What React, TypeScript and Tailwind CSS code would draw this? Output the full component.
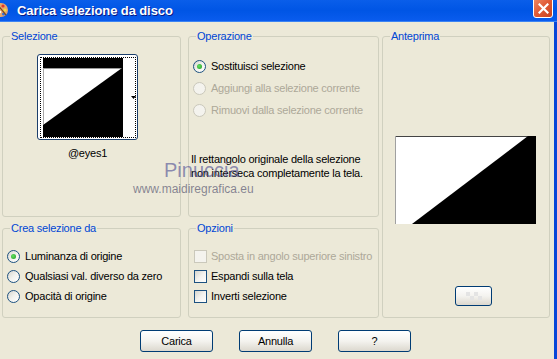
import React from "react";

function GroupBox({ label, className, children }: { label: string; className?: string; children?: React.ReactNode }) {
  return (
    <div className={`relative border border-[#D0D0BF] rounded-[3px] ${className ?? ""}`}>
      <span className="absolute left-[7px] top-[-7px] px-[1px] bg-[#ECE9D8] text-[#0046D5] leading-[13px] whitespace-nowrap">
        {label}
      </span>
      {children}
    </div>
  );
}

function Radio({ checked, disabled }: { checked?: boolean; disabled?: boolean }) {
  return (
    <span
      className={`shrink-0 w-[13px] h-[13px] rounded-full border flex items-center justify-center ${
        disabled
          ? "border-[#CAC8BB] bg-[#F4F3EE]"
          : "border-[#1C5180] bg-gradient-to-br from-[#D6D5CE] via-[#F2F2EE] to-white"
      }`}
    >
      {checked && <span className="w-[5px] h-[5px] rounded-full bg-[radial-gradient(circle_at_40%_40%,#63E063,#1F9A1F)]" />}
    </span>
  );
}

function Check({ disabled }: { disabled?: boolean }) {
  return (
    <span
      className={`shrink-0 w-[13px] h-[13px] border ${
        disabled
          ? "border-[#CAC8BB] bg-[#F4F3EE]"
          : "border-[#1C5180] bg-gradient-to-br from-[#D6D5CE] via-[#F2F2EE] to-white"
      }`}
    />
  );
}

function Row({ children, h = "h-[22px]" }: { children: React.ReactNode; h?: string }) {
  return <div className={`flex items-center ${h}`}>{children}</div>;
}

function XpButton({ children, className }: { children?: React.ReactNode; className?: string }) {
  return (
    <div
      className={`flex items-center justify-center rounded-[3px] border border-[#003C74] bg-gradient-to-b from-white via-[#F4F3EF] to-[#DCD8CE] text-black ${className ?? ""}`}
    >
      {children}
    </div>
  );
}

export default function App() {
  return (
    <div className="w-[557px] h-[359px] overflow-hidden bg-[#ECE9D8] flex flex-col relative font-['Liberation_Sans',Arial,sans-serif] text-[11px] tracking-[-0.22px] text-black">
      {/* Title bar */}
      <div className="h-[22px] shrink-0 flex items-start bg-gradient-to-b from-[#0A5EEA] via-[#0055E5] to-[#0A5CEE] border-b border-[#3B83F2]">
        <svg width="14" height="16" viewBox="0 0 14 16" className="ml-[-6px] mt-[2px]">
          <ellipse cx="7" cy="8" rx="7" ry="7" fill="#E9A66B" />
          <circle cx="9" cy="4" r="1.6" fill="#E23B2E" />
          <circle cx="11" cy="8" r="1.5" fill="#F3E23A" />
          <circle cx="9.5" cy="12" r="1.5" fill="#2F6FE0" />
          <circle cx="6" cy="10" r="1.3" fill="#FFFFFF" />
          <path d="M3 2 L12 13" stroke="#7A4A20" strokeWidth="1.2" />
        </svg>
        <span className="ml-[9px] mt-[3px] text-white font-bold text-[13px] tracking-[-0.1px] leading-[16px] [text-shadow:1px_1px_#0A1883] whitespace-nowrap">
          Carica selezione da disco
        </span>
        <div className="ml-auto mr-[4px] mt-[-3px] w-[20px] h-[21px] rounded-[3px] border border-white bg-gradient-to-br from-[#EF8A66] via-[#E05A36] to-[#C8431F] flex items-center justify-center">
          <svg width="11" height="11" viewBox="0 0 11 11" className="mt-[2px]">
            <path d="M1.5 1.5 L9.5 9.5 M9.5 1.5 L1.5 9.5" stroke="white" strokeWidth="2.2" strokeLinecap="square" />
          </svg>
        </div>
      </div>

      {/* Body */}
      <div className="flex flex-1">
        <div className="flex-1 flex flex-col pt-[14px]">
          <div className="flex">
            {/* Column 1 */}
            <div className="ml-[2px] w-[179px] flex flex-col">
              <GroupBox label="Selezione" className="h-[181px]">
                <div className="ml-[34px] mt-[17px] w-[101px] flex flex-col items-center">
                  <div className="w-[101px] h-[86px] rounded-[3px] border border-[#1B3E6B] bg-white pl-[2px] pt-[2px] pr-[1px] pb-[1px]">
                    <div className="w-full h-full border border-dotted border-black flex items-center pl-[2px]">
                      <svg width="80" height="79" viewBox="0 0 80 79" className="shrink-0 self-start">
                        <rect x="0" y="0" width="80" height="79" fill="#FFFFFF" />
                        <rect x="0" y="0" width="80" height="10" fill="#000000" />
                        <line x1="0" y1="10.5" x2="79" y2="10.5" stroke="#9A9A9A" strokeWidth="1" />
                        <line x1="0.5" y1="10" x2="0.5" y2="67" stroke="#A8A8A8" strokeWidth="1" />
                        <polygon points="79,10 80,10 80,79 0,79 0,67" fill="#000000" />
                      </svg>
                      <svg width="5" height="3" viewBox="0 0 5 3" className="ml-auto mr-[-1px]">
                        <polygon points="0,0 5,0 2.5,3" fill="#000" />
                      </svg>
                    </div>
                  </div>
                  <div className="mt-[7px] leading-[13px]">@eyes1</div>
                </div>
              </GroupBox>
              <GroupBox label="Crea selezione da" className="mt-[11px] h-[90px]">
                <div className="pl-[4px] pt-[17px] flex flex-col">
                  <Row h="h-[20px]">
                    <Radio checked />
                    <span className="ml-[5px]">Luminanza di origine</span>
                  </Row>
                  <Row h="h-[20px]">
                    <Radio />
                    <span className="ml-[5px]">Qualsiasi val. diverso da zero</span>
                  </Row>
                  <Row h="h-[20px]">
                    <Radio />
                    <span className="ml-[5px]">Opacità di origine</span>
                  </Row>
                </div>
              </GroupBox>
            </div>

            {/* Column 2 */}
            <div className="ml-[7px] w-[191px] flex flex-col">
              <GroupBox label="Operazione" className="h-[181px]">
                <div className="pl-[4px] pt-[18px] flex flex-col">
                  <Row>
                    <Radio checked />
                    <span className="ml-[5px]">Sostituisci selezione</span>
                  </Row>
                  <Row>
                    <Radio disabled />
                    <span className="ml-[5px] text-[#ACA899]">Aggiungi alla selezione corrente</span>
                  </Row>
                  <Row>
                    <Radio disabled />
                    <span className="ml-[5px] text-[#ACA899]">Rimuovi dalla selezione corrente</span>
                  </Row>
                </div>
                <p className="ml-[2px] mt-[31px] leading-[14px]">
                  Il rettangolo originale della selezione
                  <br />
                  non interseca completamente la tela.
                </p>
              </GroupBox>
              <GroupBox label="Opzioni" className="mt-[11px] h-[90px]">
                <div className="pl-[5px] pt-[17px] flex flex-col">
                  <Row h="h-[20px]">
                    <Check disabled />
                    <span className="ml-[4px] text-[#ACA899]">Sposta in angolo superiore sinistro</span>
                  </Row>
                  <Row h="h-[20px]">
                    <Check />
                    <span className="ml-[4px]">Espandi sulla tela</span>
                  </Row>
                  <Row h="h-[20px]">
                    <Check />
                    <span className="ml-[4px]">Inverti selezione</span>
                  </Row>
                </div>
              </GroupBox>
            </div>

            {/* Column 3 */}
            <div className="ml-[3px] w-[168px]">
              <GroupBox label="Anteprima" className="h-[282px]">
                <div className="flex flex-col pl-[12px] pt-[99px]">
                  <svg width="141" height="88" viewBox="0 0 141 88">
                    <rect x="0" y="0" width="141" height="88" fill="#FFFFFF" />
                    <line x1="0" y1="0.5" x2="134" y2="0.5" stroke="#444" strokeWidth="1" />
                    <line x1="0.5" y1="0" x2="0.5" y2="88" stroke="#A0A0A0" strokeWidth="1" />
                    <polygon points="133,0 141,0 141,88 17,88" fill="#000000" />
                  </svg>
                  <XpButton className="ml-[60px] mt-[62px] w-[37px] h-[20px]">
                    <svg width="16" height="8" viewBox="0 0 16 8">
                      <rect x="0" y="0" width="4" height="4" fill="#E4E4E4" />
                      <rect x="8" y="0" width="4" height="4" fill="#E4E4E4" />
                      <rect x="4" y="4" width="4" height="4" fill="#E4E4E4" />
                      <rect x="12" y="4" width="4" height="4" fill="#E4E4E4" />
                    </svg>
                  </XpButton>
                </div>
              </GroupBox>
            </div>
          </div>

          {/* Buttons */}
          <div className="flex mt-[12px] pl-[140px] gap-[26px]">
            <XpButton className="w-[73px] h-[22px]">Carica</XpButton>
            <XpButton className="w-[73px] h-[22px]">Annulla</XpButton>
            <XpButton className="w-[73px] h-[22px]">?</XpButton>
          </div>
        </div>
        <div className="w-[3px] bg-[#0846D8]" />
      </div>

      {/* Watermark overlay */}
      <div className="absolute left-[164px] top-[160px] text-[20px] leading-[20px] tracking-normal text-[#4A4A92]/60 pointer-events-none whitespace-nowrap">
        Pinuccia
      </div>
      <div className="absolute left-[133px] top-[183px] text-[12px] leading-[12px] tracking-normal text-[#3C3C60]/60 pointer-events-none whitespace-nowrap">
        www.maidiregrafica.eu
      </div>
    </div>
  );
}
